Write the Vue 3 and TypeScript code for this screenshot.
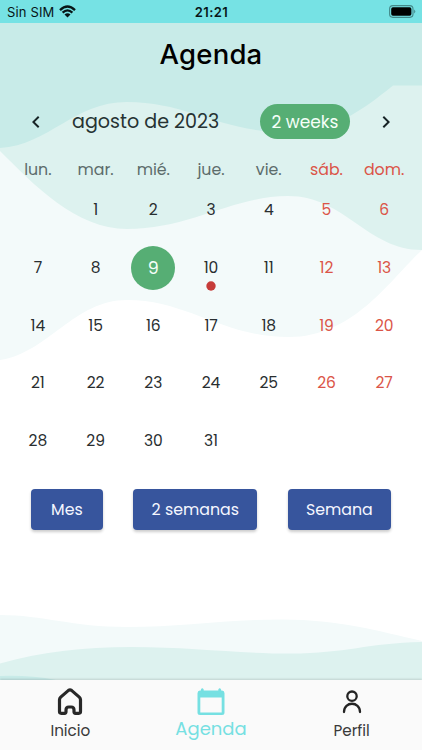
<script setup lang="ts">
interface Day {
  label: string
  weekend: boolean
}

const weekdays: string[] = ['lun.', 'mar.', 'mié.', 'jue.', 'vie.', 'sáb.', 'dom.']
const selectedDay = '9'
const eventDay = '10'

const days: Day[] = Array.from({ length: 35 }, (_, i) => ({
  label: i >= 1 && i <= 31 ? String(i) : '',
  weekend: i % 7 > 4,
}))
</script>

<template>
  <div class="screen">
    <svg class="waves" viewBox="0 0 422 750" aria-hidden="true">
      <path fill="#f3fafa" d="M0 23H422V250C392 277 355 337 289 337C222 337 188 300 127 300C74 300 48 353 0 360Z" />
      <path fill="#ddf2ef" d="M0 23H422V250C367 250 345 196 288 196C233 196 190 229 127 229C76 229 34 185 0 151Z" />
      <path fill="#c8ebe8" d="M0 23H422V85.500H393C360 112 333 132 285 132C220 132 188 102 127 102C74 102 49 145 0 148Z" />
      <path fill="#f3fafa" d="M0 615C43 615 72 627 127 627C181 627 223 619.500 282 619.500C339 619.500 378 631 422 641V680H0Z" />
      <path fill="#ddf2ef" d="M0 663.500C41 652 82 647 132 647C190 647 235 653.500 291 653.500C345 653.500 368 643 422 642V680H0Z" />
      <path fill="#c8ebe8" d="M0 676Q30 675 56 680H0Z" />
    </svg>

    <header class="status">
      <div class="carrier">
        <span class="carrier-name">Sin SIM</span>
        <svg width="17" height="13" viewBox="0 0 17 13" fill="none" stroke="#071516" stroke-width="2.300">
          <path d="M1 5.100Q8.500-2.100 16 5.100M3.600 7.700Q8.500 3.100 13.400 7.700" />
          <path d="M5.500 9.400Q8.500 6.900 11.500 9.400L8.500 12.400Z" fill="#071516" stroke="none" />
        </svg>
      </div>
      <span class="time">21:21</span>
      <svg class="battery" width="27" height="13" viewBox="0 0 27 13">
        <rect x=".6" y=".6" width="23.400" height="11.800" rx="3.300" fill="none" stroke="#43898a" stroke-width="1.100" />
        <rect x="2.200" y="2.200" width="20.200" height="8.600" rx="1.700" />
        <path d="M25.200 4.500Q27.400 6.500 25.200 8.500Z" fill="#43898a" />
      </svg>
    </header>

    <h1 class="title">Agenda</h1>

    <main>
      <div class="month-bar">
        <button class="arrow" aria-label="Mes anterior">
          <svg width="24" height="24" viewBox="0 0 24 24"><path d="M15.400 7.400 14 6l-6 6 6 6 1.400-1.400L10.800 12z" /></svg>
        </button>
        <span class="month">agosto de 2023</span>
        <button class="format">2 weeks</button>
        <button class="arrow" aria-label="Mes siguiente">
          <svg width="24" height="24" viewBox="0 0 24 24"><path d="M10 6 8.600 7.400l4.600 4.600-4.600 4.600L10 18l6-6z" /></svg>
        </button>
      </div>

      <div class="weekdays">
        <span v-for="(name, i) in weekdays" :key="name" :class="{ weekend: i > 4 }">{{ name }}</span>
      </div>

      <div class="days">
        <div v-for="(day, i) in days" :key="i" class="day" :class="{ weekend: day.weekend }">
          <span :class="{ selected: day.label === selectedDay }">{{ day.label }}</span>
          <svg v-if="day.label === eventDay" class="marker" viewBox="0 0 10 10"><circle cx="5" cy="5" r="4.700" /></svg>
        </div>
      </div>

      <div class="actions">
        <button class="mes">Mes</button>
        <button class="quincena">2 semanas</button>
        <button class="semana">Semana</button>
      </div>
    </main>

    <nav class="tabs">
      <a class="tab">
        <svg width="28" height="30" viewBox="0 0 28 30" fill="none" stroke="#282828" stroke-width="3.200" stroke-linejoin="round">
          <path d="M3.500 12.800Q3.500 11.200 4.700 10.100L12.500 3.400Q14 2.300 15.500 3.400L23.300 10.100Q24.500 11.200 24.500 12.800V24.600Q24.500 26.300 22.800 26.300H19.500Q18 26.300 18 24.800V22.900Q18 20 15.200 20H12.800Q10 20 10 22.900V24.800Q10 26.300 8.500 26.300H5.200Q3.500 26.300 3.500 24.600Z" />
        </svg>
        <span>Inicio</span>
      </a>
      <a class="tab active">
        <svg width="30" height="30" viewBox="0 0 30 30">
          <path fill="#76e0e2" fill-rule="evenodd" d="M4.900 2.400Q6.300.2 7.700 2.400V3.500H22.300V2.400Q23.700.2 25.100 2.400V3.500H26Q28.500 3.700 28.500 6.200V25.500Q28.500 28 26 28H4Q1.500 28 1.500 25.500V6.200Q1.500 3.700 4 3.500H4.900ZM4.300 10.500V25.500H25.700V10.500Z" />
        </svg>
        <span>Agenda</span>
      </a>
      <a class="tab">
        <svg width="24" height="30" viewBox="0 0 24 30" fill="none" stroke="#242424" stroke-width="2.300" stroke-linecap="round">
          <circle cx="12" cy="9.200" r="4.700" />
          <path d="M4 25C4 14 20 14 20 25" />
        </svg>
        <span>Perfil</span>
      </a>
    </nav>
  </div>
</template>

<style>
body {
  margin: 0;
  background: #fff;
}
</style>

<style scoped>
.screen {
  position: relative;
  isolation: isolate;
  display: flex;
  flex-direction: column;
  width: 422px;
  height: 750px;
  overflow: hidden;
  background: #fff;
  color: #263333;
  font-family: Poppins, Inter, "Liberation Sans", sans-serif;
}
.waves {
  position: absolute;
  inset: 0;
  z-index: -1;
  width: 422px;
  height: 750px;
}
button {
  padding: 0;
  border: 0;
  font: inherit;
  color: inherit;
  background: none;
}
.status {
  display: grid;
  grid-template-columns: 1fr auto 1fr;
  align-items: center;
  box-sizing: border-box;
  height: 23px;
  padding: 0 6px 1px 7px;
  background: #76e2e4;
  color: #071516;
  font: 13px/22px Inter, sans-serif;
}
.carrier {
  display: flex;
  align-items: center;
  gap: 5px;
}
.carrier-name {
  padding-top: 1px;
  letter-spacing: .15px;
}
.time {
  padding-top: 1px;
  font-weight: 600;
  letter-spacing: .45px;
}
.battery {
  justify-self: end;
}
.title {
  height: 62px;
  margin: 0;
  text-align: center;
  color: #000;
  font: 500 27.500px/62px Inter, sans-serif;
  letter-spacing: .2px;
}
.month-bar {
  display: flex;
  align-items: center;
  height: 35px;
  margin-top: 19px;
  padding: 0 24px;
}
.arrow {
  display: flex;
  width: 24px;
  height: 24px;
  fill: #172426;
}
.month {
  flex: 1;
  padding-left: 24px;
  white-space: nowrap;
  font-size: 19.100px;
}
.format {
  width: 90px;
  height: 35px;
  margin-right: 24px;
  border-radius: 18px;
  background: #56ae74;
  color: #f5fff8;
  font-size: 17px;
}
.weekdays,
.days {
  display: grid;
  grid-template-columns: repeat(7, 1fr);
  padding: 0 9px;
}
.weekdays {
  height: 24px;
  margin-top: 18px;
  text-align: center;
  color: #5c6c6b;
  font-size: 15.800px;
  line-height: 25px;
}
.days {
  grid-auto-rows: 57.700px;
}
.day {
  position: relative;
  display: flex;
  align-items: center;
  justify-content: center;
  color: #292e30;
  font-size: 15.500px;
  letter-spacing: -.1px;
}
.weekdays .weekend,
.day.weekend {
  color: #db5548;
}
.selected {
  width: 44px;
  height: 44px;
  border-radius: 50%;
  background: #56ae74;
  color: #f5fff8;
  text-align: center;
  font-size: 17.500px;
  line-height: 44px;
}
.marker {
  position: absolute;
  top: 42.500px;
  left: calc(50% - 5px);
  width: 10px;
  height: 10px;
  fill: #c63c39;
}
.actions {
  display: flex;
  gap: 30.500px;
  margin-top: 20px;
  padding: 0 31px;
}
.actions button {
  height: 41px;
  border-radius: 4px;
  background: #37559d;
  box-shadow: 0 2px 3px #0003;
  color: #f5f7ff;
  font-size: 15.800px;
}
.actions .mes {
  width: 72px;
}
.actions .quincena {
  width: 124px;
}
.actions .semana {
  width: 103.500px;
}
.tabs {
  display: grid;
  grid-template-columns: repeat(3, 1fr);
  height: 70px;
  margin-top: auto;
  background: #fafafa;
  box-shadow: 0 -1px 2px #0002;
}
.tab {
  display: flex;
  flex-direction: column;
  align-items: center;
  padding-top: 7px;
  color: #393939;
  font-size: 15.200px;
  line-height: 28px;
}
.tab svg {
  flex: none;
}
.active {
  color: #76e0e2;
  font-size: 18px;
  line-height: 24px;
}
</style>
